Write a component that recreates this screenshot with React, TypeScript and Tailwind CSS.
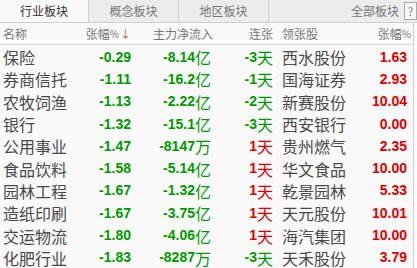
import React from 'react'

type Row = {
  name: string
  pct: string
  flow: string
  unit: string
  streak: string
  up: boolean
  leader: string
  lpct: string
}

const rows: Row[] = [
  { name: '保险', pct: '-0.29', flow: '-8.14', unit: '亿', streak: '-3', up: false, leader: '西水股份', lpct: '1.63' },
  { name: '券商信托', pct: '-1.11', flow: '-16.2', unit: '亿', streak: '-1', up: false, leader: '国海证券', lpct: '2.93' },
  { name: '农牧饲渔', pct: '-1.13', flow: '-2.22', unit: '亿', streak: '-2', up: false, leader: '新赛股份', lpct: '10.04' },
  { name: '银行', pct: '-1.32', flow: '-15.1', unit: '亿', streak: '-3', up: false, leader: '西安银行', lpct: '0.00' },
  { name: '公用事业', pct: '-1.47', flow: '-8147', unit: '万', streak: '1', up: true, leader: '贵州燃气', lpct: '2.35' },
  { name: '食品饮料', pct: '-1.58', flow: '-5.14', unit: '亿', streak: '1', up: true, leader: '华文食品', lpct: '10.00' },
  { name: '园林工程', pct: '-1.67', flow: '-1.32', unit: '亿', streak: '1', up: true, leader: '乾景园林', lpct: '5.33' },
  { name: '造纸印刷', pct: '-1.67', flow: '-3.75', unit: '亿', streak: '1', up: true, leader: '天元股份', lpct: '10.01' },
  { name: '交运物流', pct: '-1.80', flow: '-4.06', unit: '亿', streak: '1', up: true, leader: '海汽集团', lpct: '10.00' },
  { name: '化肥行业', pct: '-1.83', flow: '-8287', unit: '万', streak: '-3', up: false, leader: '天禾股份', lpct: '3.79' },
]

const cjk = { fontFamily: '"Noto Sans CJK SC", "Noto Sans", sans-serif' }
const num = { fontFamily: '"Liberation Sans", Arial, sans-serif' }

export default function App() {
  return (
    <div className="w-[417px] h-[268px] overflow-hidden bg-[#f9f9f9] text-[#555]" style={cjk}>
      {/* Tabs */}
      <div className="flex h-[23px] border-b border-[#cfcfcf] text-[12px] leading-[22px]">
        <div className="w-[89px] text-center bg-[#f9f9f9] text-[#333] border-r border-[#cfcfcf]">行业板块</div>
        <div className="w-[90px] text-center bg-[#ececec] text-[#777] border-r border-[#cfcfcf]">概念板块</div>
        <div className="w-[90px] text-center bg-[#ececec] text-[#777] border-r border-[#cfcfcf]">地区板块</div>
        <div className="flex-1 flex items-center justify-end bg-[#ececec] text-[#777]">
          <span className="mr-[5px]">全部板块</span>
          <span className="w-[13px] h-[18px] border border-[#aaa] bg-[#f6f6f6] text-[11px] leading-[16px] text-center text-[#777]">?</span>
        </div>
      </div>

      <div className="flex">
        <div className="w-[413px]">
          {/* Header */}
          <div className="flex h-[22px] items-center border-b border-[#d8d8d8] text-[12px] text-[#777]">
            <div className="w-[78px] pl-[3px]">名称</div>
            <div className="w-[53px] flex justify-end items-center">
              <span>张幅</span>
              <span className="text-[10px]">%</span>
              <span className="text-[#e0501e] text-[11px] ml-[1px]">↓</span>
            </div>
            <div className="w-[82px] text-right">主力净流入</div>
            <div className="w-[60px] text-right">连张</div>
            <div className="w-[88px] pl-[9px]">领张股</div>
            <div className="flex-1 flex justify-end pr-[2px]">
              <span>张幅</span>
              <span className="text-[10px] leading-[18px]">%</span>
            </div>
          </div>

          {/* Rows */}
          <div className="pt-[1px]">
            {rows.map((r) => (
              <div key={r.name} className="flex h-[22.3px] items-center whitespace-nowrap">
                <div className="w-[78px] pl-[3px] text-[16px] text-[#4a4a4a]">{r.name}</div>
                <div className="w-[53px] text-right text-[14px] font-bold text-[#009a00]" style={num}>{r.pct}</div>
                <div className="w-[80px] flex justify-end items-center text-[#009a00]">
                  <span className="text-[14px] font-bold" style={num}>{r.flow}</span>
                  <span className="text-[16px]">{r.unit}</span>
                </div>
                <div className={`w-[62px] flex justify-end items-center ${r.up ? 'text-[#e00000]' : 'text-[#009a00]'}`}>
                  <span className="text-[14px] font-bold" style={num}>{r.streak}</span>
                  <span className="text-[16px]">天</span>
                </div>
                <div className="w-[87px] pl-[9px] text-[16px] text-[#4a4a4a]">{r.leader}</div>
                <div className="w-[47px] text-right text-[14px] font-bold text-[#e00000]" style={num}>{r.lpct}</div>
              </div>
            ))}
          </div>
        </div>
        <div className="flex-1 border-l border-[#cfcfcf] bg-[#fcfcfc]" />
      </div>
    </div>
  )
}
